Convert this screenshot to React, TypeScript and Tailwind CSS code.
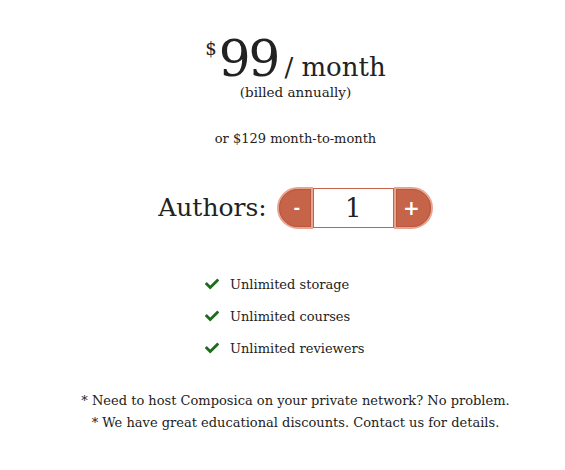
import React, { useState } from 'react';
import { FaCheck } from 'react-icons/fa';

const FEATURES = ['Unlimited storage', 'Unlimited courses', 'Unlimited reviewers'];

function AuthorStepper() {
  const [count, setCount] = useState(1);
  return (
    <div className="flex items-center h-[42px]">
      <button
        onClick={() => setCount(Math.max(1, count - 1))}
        className="w-[36px] h-[42px] rounded-l-[21px] bg-[#c6644a] border-2 border-[#e7a58f] outline outline-1 outline-[#b9573f] -outline-offset-3 text-white text-[16px] font-bold flex items-center justify-center pl-1"
      >
        -
      </button>
      <input
        value={count}
        onChange={(e) => setCount(Number(e.target.value) || 1)}
        className="w-[81px] h-[40px] border border-[#c6644a] text-center text-[26px] text-[#222] outline-none"
      />
      <button
        onClick={() => setCount(count + 1)}
        className="w-[39px] h-[42px] rounded-r-[21px] bg-[#c6644a] border-2 border-[#e7a58f] outline outline-1 outline-[#b9573f] -outline-offset-3 text-white text-[20px] font-bold flex items-center justify-center pr-1"
      >
        +
      </button>
    </div>
  );
}

export default function App() {
  return (
    <div className="w-[565px] h-[470px] bg-white text-[#222] flex flex-col items-center pt-[34px] pl-[26px] font-['DejaVu_Serif',serif]">
      <div className="flex items-baseline leading-none">
        <span className="text-[18px] self-start mt-[6px] mr-[2px]">$</span>
        <span className="text-[50px] tracking-[-2px]">99</span>
        <span className="text-[26px] ml-[6px]">/ month</span>
      </div>
      <div className="text-[13.5px] -mt-[2px]">(billed annually)</div>
      <div className="text-[13px] mt-[27px]">or $129 month-to-month</div>

      <div className="flex items-center mt-[38px]">
        <span className="text-[25px] mr-[10px]">Authors:</span>
        <AuthorStepper />
      </div>

      <ul className="mt-[46px] flex flex-col gap-[13px] text-[13px] self-start ml-[179px]">
        {FEATURES.map((f) => (
          <li key={f} className="flex items-center gap-[11px] leading-[19px]">
            <FaCheck className="text-[#1d6b1d] w-[14px] h-[14px]" />
            {f}
          </li>
        ))}
      </ul>

      <div className="mt-[32px] text-[13px] leading-[22px] text-center">
        <div>* Need to host Composica on your private network? No problem.</div>
        <div>* We have great educational discounts. Contact us for details.</div>
      </div>
    </div>
  );
}
